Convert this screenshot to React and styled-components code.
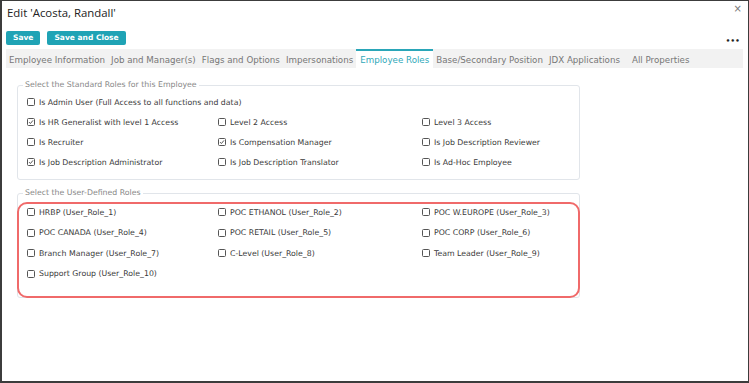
import React from 'react';
import styled, { createGlobalStyle } from 'styled-components';

const Global = createGlobalStyle`
  html, body { margin: 0; padding: 0; background: #fff; }
  body { font-family: "DejaVu Sans", Verdana, sans-serif; }
  * { box-sizing: border-box; }
`;

const Dialog = styled.div`
  position: relative;
  width: 749px;
  height: 383px;
  background: #fff;
  border: 1px solid #3c3c3c;
  border-left-width: 2px;
  border-bottom-width: 2px;
  padding: 0 4px;
  display: flex;
  flex-direction: column;
`;

const Title = styled.div`
  margin: 5px 0 0 1px;
  height: 14px;
  font-family: "Open Sans", "Noto Sans", sans-serif;
  font-size: 11.4px;
  line-height: 14px;
  color: #222;
`;

const Close = styled.div`
  position: absolute;
  top: 2px;
  right: 6px;
  font-family: "DejaVu Sans", sans-serif;
  font-size: 10px;
  color: #777;
`;

const Toolbar = styled.div`
  margin-top: 11px;
  height: 14px;
  display: flex;
  align-items: center;
  gap: 7px;
`;

const Button = styled.button`
  height: 14px;
  padding: 0 7px;
  border: none;
  border-radius: 2px;
  background: #1fa3b5;
  color: #fff;
  font-family: "DejaVu Sans", Verdana, sans-serif;
  font-weight: bold;
  font-size: 7.5px;
  line-height: 14px;
  cursor: pointer;
`;

const More = styled.div`
  margin-left: auto;
  margin-right: 4px;
  margin-top: 5px;
  font-size: 7px;
  font-weight: bold;
  letter-spacing: 0.3px;
  color: #222;
  line-height: 8px;
`;

const TabBar = styled.div`
  margin-top: 4px;
  margin-right: 1px;
  height: 19px;
  background: #f2f2f2;
  display: flex;
  align-items: stretch;
`;

const Tab = styled.div`
  padding: 0 ${p => (p.$active ? 4 : 3)}px;
  margin-left: ${p => (p.$gap ? 6 : 0)}px;
  font-size: 8.7px;
  line-height: 18px;
  color: ${p => (p.$active ? '#2fa8b9' : '#777')};
  background: ${p => (p.$active ? '#fff' : 'transparent')};
  border-top: 2px solid ${p => (p.$active ? '#2aa6b8' : 'transparent')};
  white-space: nowrap;
`;

const Content = styled.div`
  padding-left: 11px;
  display: flex;
  flex-direction: column;
`;

const Fieldset = styled.fieldset`
  position: relative;
  width: 563px;
  margin: ${p => p.$top}px 0 0 0;
  padding: ${p => p.$ptop}px 8px ${p => p.$bottom}px 9px;
  border: 1px solid #e1e5ea;
  border-radius: 3px;
  min-width: 0;
`;

const Legend = styled.legend`
  margin-left: -4px;
  padding: 0 2px;
  font-size: 7.8px;
  line-height: 10px;
  color: #888;
`;

const Grid = styled.div`
  display: grid;
  grid-template-columns: 191px 204px 1fr;
  grid-auto-rows: ${p => p.$row}px;
  align-items: center;
`;

const Item = styled.label`
  grid-column: ${p => (p.$full ? '1 / -1' : 'auto')};
  display: flex;
  align-items: center;
  gap: 4px;
  font-size: 7.8px;
  color: #3a3a3a;
  white-space: nowrap;
`;

const Box = styled.span`
  width: 8px;
  height: 8px;
  border: 1px solid #555;
  border-radius: 1.5px;
  display: inline-flex;
  align-items: center;
  justify-content: center;
  flex: none;
  background: #fff;
`;

const Highlight = styled.div`
  position: absolute;
  top: 4px;
  left: -1px;
  right: -1px;
  bottom: -1px;
  border: 2px solid #f06a6a;
  border-radius: 10px;
  pointer-events: none;
`;

const Check = ({ on }) => (
  <Box>
    {on && (
      <svg width="6" height="6" viewBox="0 0 6 6">
        <path d="M1 3.1 L2.4 4.5 L5 1.4" fill="none" stroke="#444" strokeWidth="0.9" />
      </svg>
    )}
  </Box>
);

const tabs = [
  'Employee Information',
  'Job and Manager(s)',
  'Flags and Options',
  'Impersonations',
  'Employee Roles',
  'Base/Secondary Position',
  'JDX Applications',
  'All Properties',
];

const standard = [
  ['Is HR Generalist with level 1 Access', true],
  ['Level 2 Access', false],
  ['Level 3 Access', false],
  ['Is Recruiter', false],
  ['Is Compensation Manager', true],
  ['Is Job Description Reviewer', false],
  ['Is Job Description Administrator', true],
  ['Is Job Description Translator', false],
  ['Is Ad-Hoc Employee', false],
];

const userRoles = [
  'HRBP (User_Role_1)',
  'POC ETHANOL (User_Role_2)',
  'POC W.EUROPE (User_Role_3)',
  'POC CANADA (User_Role_4)',
  'POC RETAIL (User_Role_5)',
  'POC CORP (User_Role_6)',
  'Branch Manager (User_Role_7)',
  'C-Level (User_Role_8)',
  'Team Leader (User_Role_9)',
  'Support Group (User_Role_10)',
];

export default function App() {
  return (
    <>
      <Global />
      <Dialog>
        <Title>Edit 'Acosta, Randall'</Title>
        <Close>×</Close>
        <Toolbar>
          <Button>Save</Button>
          <Button>Save and Close</Button>
          <More>•••</More>
        </Toolbar>
        <TabBar>
          {tabs.map((t, i) => (
            <Tab key={t} $active={t === 'Employee Roles'} $gap={i === tabs.length - 1}>
              {t}
            </Tab>
          ))}
        </TabBar>
        <Content>
          <Fieldset $top={12} $ptop={2} $bottom={7}>
            <Legend>Select the Standard Roles for this Employee</Legend>
            <Grid $row={20}>
              <Item $full>
                <Check on={false} />
                Is Admin User (Full Access to all functions and data)
              </Item>
              {standard.map(([label, on]) => (
                <Item key={label}>
                  <Check on={on} />
                  {label}
                </Item>
              ))}
            </Grid>
          </Fieldset>
          <Fieldset $top={8} $ptop={4} $bottom={13}>
            <Legend>Select the User-Defined Roles</Legend>
            <Highlight />
            <Grid $row={20.5}>
              {userRoles.map(label => (
                <Item key={label}>
                  <Check on={false} />
                  {label}
                </Item>
              ))}
            </Grid>
          </Fieldset>
        </Content>
      </Dialog>
    </>
  );
}
